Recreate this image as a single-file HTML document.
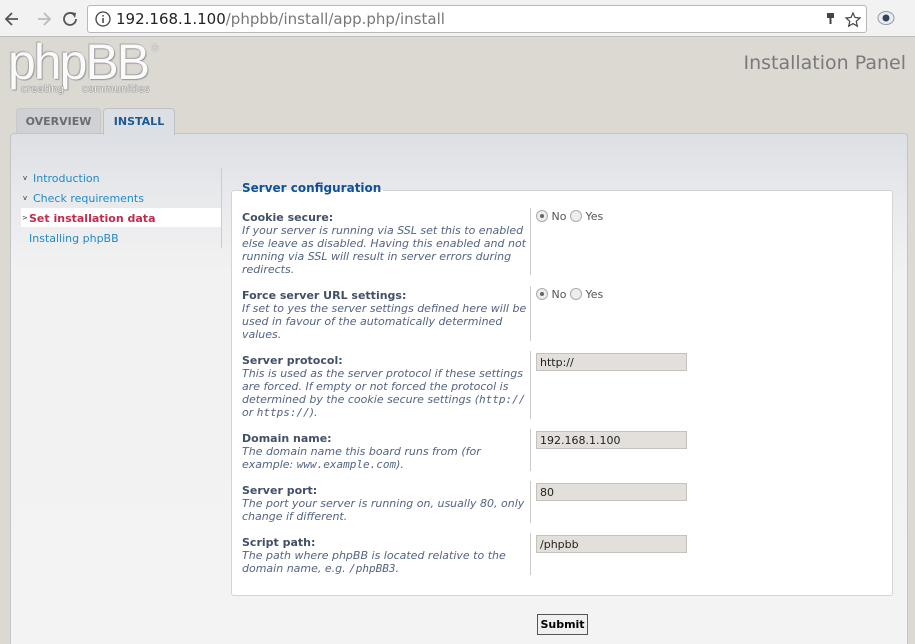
<!DOCTYPE html>
<html><head><meta charset="utf-8">
<style>
*{margin:0;padding:0;box-sizing:border-box}
html{overflow:hidden}
body{width:915px;height:644px;overflow:hidden;background:#dcd9d3;font-family:"DejaVu Sans","Liberation Sans",sans-serif;position:relative}
.abs{position:absolute}
#bar{left:0;top:0;width:915px;height:37px;background:#f2f2f2;border-bottom:1px solid #bdbdbd}
#url{left:87px;top:5px;width:780px;height:28px;background:#fff;border:1px solid #b8b8b8;border-radius:3px;font-size:15px;color:#222;line-height:26px;padding-left:28px}
#url span{color:#777}
.tab{top:108px;height:26px;border:1px solid #c8c8c8;border-bottom:none;border-radius:4px 4px 0 0;font-size:11px;font-weight:bold;line-height:26px;text-align:center}
#panel{left:10px;top:133px;width:898px;height:511px;border:1px solid #c4c4c4;border-bottom:none;border-radius:4px 4px 0 0;background:linear-gradient(#dcdfe4 0px,#e8e9ec 60px,#f2f2f2 140px,#f3f3f3)}
.mi{left:21px;width:200px;height:19px;font-size:11px;line-height:19px;color:#1f8bc7}
#fs{left:231px;top:190px;width:662px;height:406px;background:#fff;border:1px solid #d4d4d4;border-radius:3px}
.lbl{left:242px;width:288px;font-size:11px;line-height:13px;color:#4c5d77}
.lbl b{color:#425067;display:block;font-size:11px}
.lbl i{color:#536482}
.lbl code{font-family:"DejaVu Sans Mono",monospace;font-style:italic;font-size:11px}
.div{left:530px;width:1px;background:#ccc}
.inp{left:536px;width:151px;height:18px;background:#e3e0db;border:1px solid #c5c2bd;font-size:11px;line-height:17px;padding-left:3px;color:#222}
.rad{left:536px;font-size:11px;color:#555;line-height:13px}
.r{display:inline-block;width:12px;height:12px;border:1px solid #aaa;border-radius:50%;background:#eee;vertical-align:-2px;position:relative}
.r.on:after{content:"";position:absolute;left:3px;top:3px;width:4px;height:4px;border-radius:50%;background:#666}
</style></head><body>
<div id="bar" class="abs"></div>
<svg class="abs" style="left:4px;top:10px" width="80" height="18" viewBox="0 0 80 18">
<path d="M14 9H3M8 3L2 9l6 6" stroke="#555" stroke-width="1.8" fill="none"/>
<path d="M34 9h11M40 3l6 6-6 6" stroke="#bbb" stroke-width="1.8" fill="none"/>
<path d="M70 4.5A6 6 0 1 0 72 9" stroke="#555" stroke-width="1.8" fill="none"/><path d="M67 2l5 1-1 5z" fill="#555"/>
</svg>
<div id="url" class="abs">192.168.1.100<span>/phpbb/install/app.php/install</span></div>
<svg class="abs" style="left:95px;top:11px" width="16" height="16"><circle cx="8" cy="8" r="7" stroke="#444" stroke-width="1.3" fill="none"/><rect x="7.3" y="7" width="1.5" height="5" fill="#444"/><rect x="7.3" y="4" width="1.5" height="1.6" fill="#444"/></svg>
<svg class="abs" style="left:823px;top:11px" width="40" height="16"><rect x="4" y="2" width="7" height="5" fill="#444"/><rect x="6.5" y="6" width="2" height="7" fill="#444"/><path d="M30 2l2 4.5 5 .5-3.8 3.3 1.2 4.9L30 12.6l-4.4 2.6 1.2-4.9L23 7l5-.5z" stroke="#444" stroke-width="1.2" fill="none"/></svg>
<svg class="abs" style="left:877px;top:10px" width="20" height="18"><ellipse cx="9" cy="8" rx="8" ry="6.5" fill="#e8eef5" stroke="#999"/><circle cx="9" cy="8" r="3.5" fill="#345"/></svg>
<div class="abs" style="left:8px;top:33px;font-size:50px;font-family:'Liberation Sans',sans-serif;color:#fafafa;letter-spacing:-2px;text-shadow:0 0 1px #888,1px 1px 1px #999,-1px -1px 1px #aaa">phpBB</div>
<div class="abs" style="left:150px;top:43px;font-size:10px;color:#eee;text-shadow:0 0 1px #666">®</div>
<div class="abs" style="left:21px;top:84px;font-size:10px;color:#f5f5f5;text-shadow:0 0 1px #555,0 0 1px #555;word-spacing:14px;letter-spacing:0.3px">creating communities</div>
<div class="abs" style="right:9px;top:52px;font-size:19px;color:#7a7a7a">Installation Panel</div>
<div class="tab abs" style="left:16px;width:85px;background:#cfd1d4;color:#6a6d70">OVERVIEW</div>
<div id="panel" class="abs"></div>
<div class="tab abs" style="left:103px;width:72px;height:27px;background:#dcdfe4;color:#1c5a93;border-color:#c0c0c0">INSTALL</div>
<div class="abs" style="left:221px;top:168px;width:1px;height:80px;background:#ccc"></div>
<div class="mi abs" style="top:169px;padding-left:12px">Introduction</div>
<div class="mi abs" style="top:189px;padding-left:12px">Check requirements</div>
<div class="mi abs" style="top:208px;background:#fff;color:#c02c4e;font-weight:bold;padding-left:8px;line-height:21px">Set installation data</div>
<div class="mi abs" style="top:229px;padding-left:8px">Installing phpBB</div>
<div class="abs" style="left:23px;top:174px;font-size:7px;color:#333">v</div>
<div class="abs" style="left:23px;top:194px;font-size:7px;color:#333">v</div>
<div class="abs" style="left:22px;top:214px;font-size:7px;color:#333">&gt;</div>
<div id="fs" class="abs"></div>
<div class="abs" style="left:242px;top:181px;font-size:12px;font-weight:bold;color:#115098;background:linear-gradient(transparent 9px,#fff 9px);padding-right:2px">Server configuration</div>

<div class="lbl abs" style="top:211px"><b>Cookie secure:</b><i>If your server is running via SSL set this to enabled else leave as disabled. Having this enabled and not running via SSL will result in server errors during redirects.</i></div>
<div class="div abs" style="top:208px;height:67px"></div>
<div class="rad abs" style="top:210px"><span class="r on"></span> No <span class="r"></span> Yes</div>

<div class="lbl abs" style="top:289px"><b>Force server URL settings:</b><i>If set to yes the server settings defined here will be used in favour of the automatically determined values.</i></div>
<div class="div abs" style="top:286px;height:55px"></div>
<div class="rad abs" style="top:288px"><span class="r on"></span> No <span class="r"></span> Yes</div>

<div class="lbl abs" style="top:354px"><b>Server protocol:</b><i>This is used as the server protocol if these settings are forced. If empty or not forced the protocol is determined by the cookie secure settings (<code>http://</code> or <code>https://</code>).</i></div>
<div class="div abs" style="top:351px;height:68px"></div>
<div class="inp abs" style="top:353px">http://</div>

<div class="lbl abs" style="top:432px"><b>Domain name:</b><i>The domain name this board runs from (for example: <code>www.example.com</code>).</i></div>
<div class="div abs" style="top:429px;height:42px"></div>
<div class="inp abs" style="top:431px">192.168.1.100</div>

<div class="lbl abs" style="top:484px"><b>Server port:</b><i>The port your server is running on, usually 80, only change if different.</i></div>
<div class="div abs" style="top:481px;height:42px"></div>
<div class="inp abs" style="top:483px">80</div>

<div class="lbl abs" style="top:536px"><b>Script path:</b><i>The path where phpBB is located relative to the domain name, e.g. <code>/phpBB3</code>.</i></div>
<div class="div abs" style="top:533px;height:42px"></div>
<div class="inp abs" style="top:535px">/phpbb</div>

<div class="abs" style="left:537px;top:614px;width:51px;height:21px;border:1px solid #555;background:#f0f0f0;font-size:11px;font-weight:bold;line-height:19px;text-align:center;color:#000">Submit</div>
</body></html>
